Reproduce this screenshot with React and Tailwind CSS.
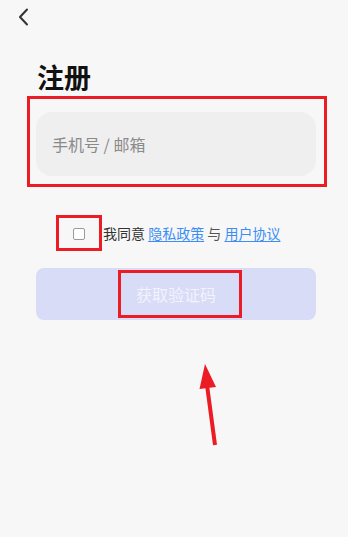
import React from "react";

export default function App() {
  const font = { fontFamily: '"Noto Sans CJK SC", "Noto Sans", sans-serif' };
  return (
    <div className="relative w-[348px] h-[537px] overflow-hidden bg-[#f7f7f7]" style={font}>
      {/* header */}
      <div className="h-[33px] pl-[18px] pt-[8px]">
        <svg width="11" height="18" viewBox="0 0 11 18" fill="none">
          <path d="M9 1.5L2 9l7 7.5" stroke="#333" strokeWidth="2" strokeLinecap="round" strokeLinejoin="round" />
        </svg>
      </div>

      <div className="pl-[36px] pr-[32px]">
        <h1 className="mt-[28px] ml-[1px] h-[32px] text-[27px] leading-[32px] font-bold text-[#111]">注册</h1>

        {/* input */}
        <div className="relative mt-[19px] h-[64px] rounded-[16px] bg-[#efefef] flex items-center pl-[16px]">
          <span className="text-[16px] text-[#8a8a8a]">手机号 / 邮箱</span>
          <div className="absolute left-[-9px] top-[-16px] w-[300px] h-[91px] border-[3px] border-[#ec1c24]" />
        </div>

        {/* agree row */}
        <div className="mt-[40px] h-[35px] flex items-center">
          <div className="relative ml-[37px] w-[12px] h-[12px] border border-[#9a9a9a] rounded-[2px] bg-white">
            <div className="absolute left-[-18px] top-[-14px] w-[46px] h-[36px] border-[3px] border-[#ec1c24]" />
          </div>
          <div className="ml-[18px] text-[14px] text-[#333] whitespace-nowrap">
            我同意 <span className="text-[#3b8ef3] underline underline-offset-2">隐私政策</span> <span className="text-[#555]">与</span>{" "}
            <span className="text-[#3b8ef3] underline underline-offset-2">用户协议</span>
          </div>
        </div>

        {/* button */}
        <div className="mt-[17px] h-[52px] rounded-[8px] bg-[#d8dcf7] flex items-center justify-center">
          <div className="ml-[8px] w-[124px] h-[48px] border-[3px] border-[#ec1c24] flex items-center justify-center pr-[8px]">
            <span className="text-[16px] text-[#f2f3ff]">获取验证码</span>
          </div>
        </div>
      </div>

      {/* arrow annotation */}
      <svg className="absolute left-0 top-0" width="348" height="537" viewBox="0 0 348 537">
        <line x1="215" y1="445" x2="207" y2="385" stroke="#ec1c24" strokeWidth="4" />
        <polygon points="205,364 199.5,389 216,387" fill="#ec1c24" />
      </svg>
    </div>
  );
}
